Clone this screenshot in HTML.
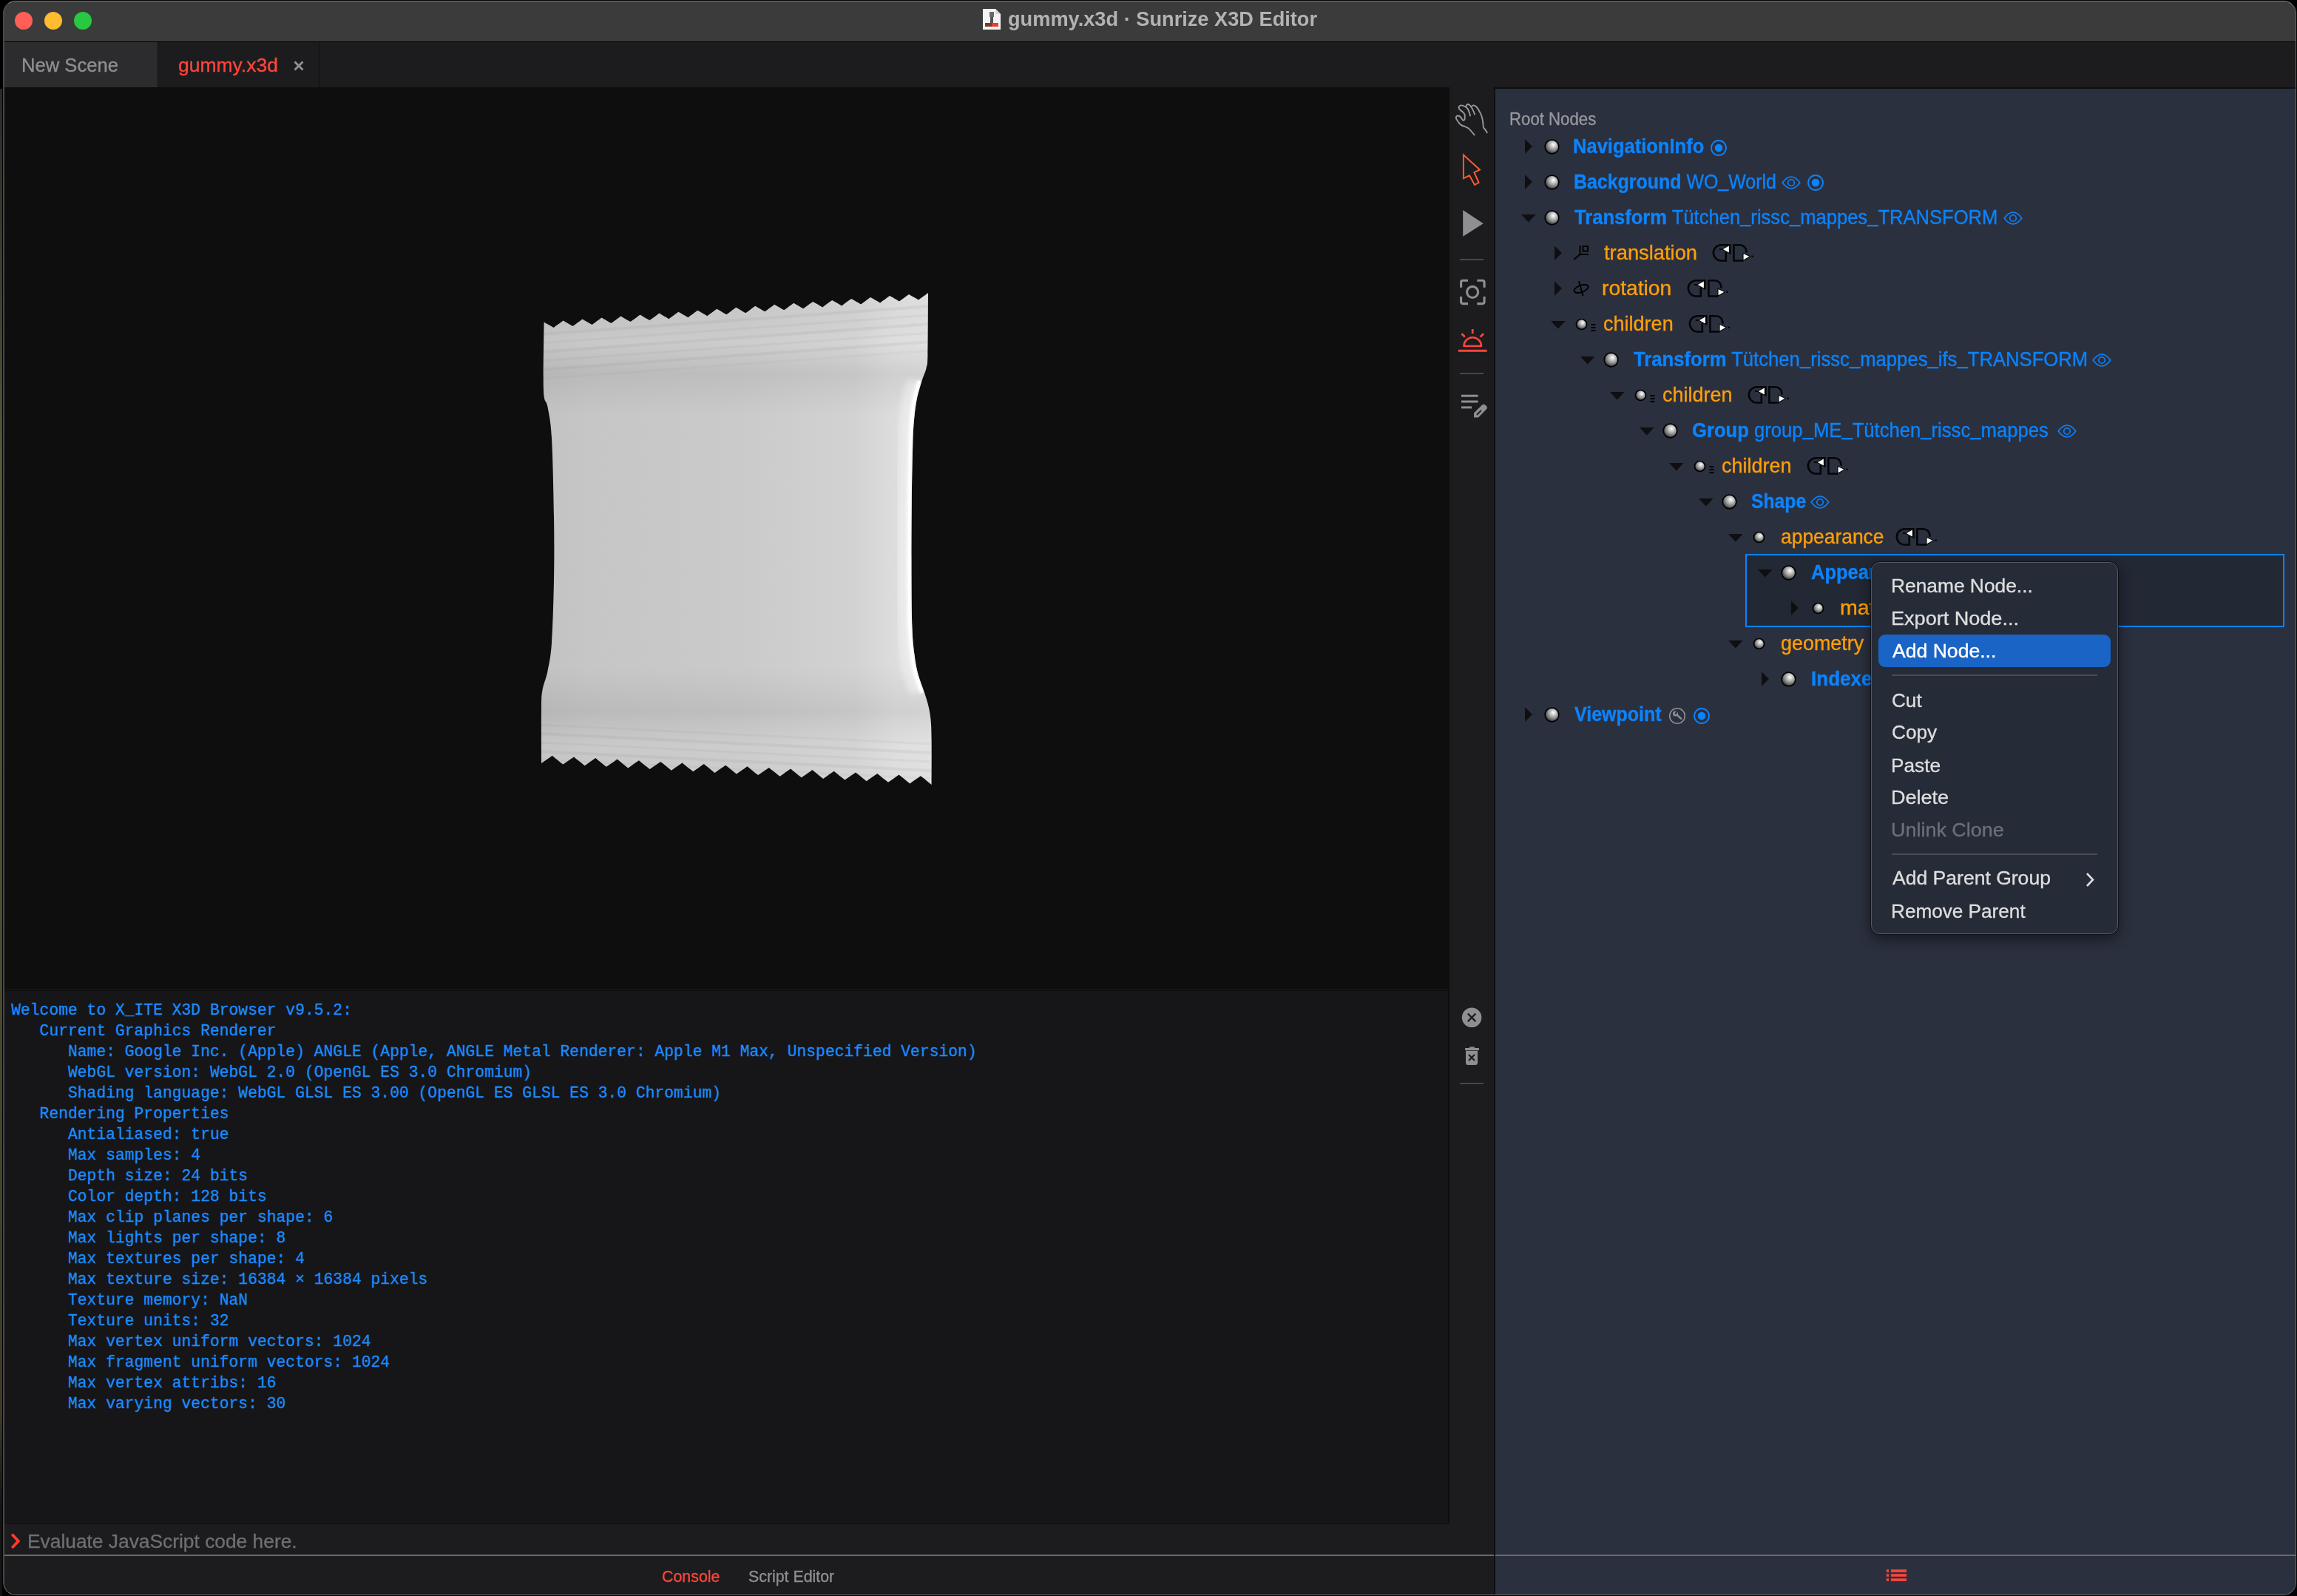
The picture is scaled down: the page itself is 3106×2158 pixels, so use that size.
<!DOCTYPE html>
<html><head><meta charset="utf-8"><title>gummy.x3d · Sunrize X3D Editor</title>
<style>
html,body{margin:0;padding:0;background:#000;width:3106px;height:2158px;overflow:hidden}
#win{position:absolute;left:0;top:0;width:3106px;height:2158px;overflow:hidden}
</style></head><body>
<div style="position:absolute;left:0;top:120px;width:3px;height:2038px;background:linear-gradient(#2a2a2a,#3d4430 15%,#525a38 25%,#4a4a30 60%,#3e3a26 88%,#131313 94%,#131313 100%)"></div>
<div id="clip" style="position:absolute;left:4px;top:1px;width:3101px;height:2156px;border-radius:17px 17px 17px 17px;overflow:hidden">
<div style="position:absolute;left:-4px;top:-1px;width:3106px;height:2158px">
<div style="position:absolute;left:4px;top:1px;width:3101px;height:56px;background:#3b3b3b;"></div>
<div style="position:absolute;left:19.7px;top:15.7px;width:24.6px;height:24.6px;border-radius:50%;background:#ff5f57"></div>
<div style="position:absolute;left:59.7px;top:15.7px;width:24.6px;height:24.6px;border-radius:50%;background:#febc2e"></div>
<div style="position:absolute;left:99.7px;top:15.7px;width:24.6px;height:24.6px;border-radius:50%;background:#28c840"></div>
<svg style="position:absolute;left:1326px;top:10px;" width="30" height="32" viewBox="0 0 30 32">
<path d="M3 2 H20 L27 9 V30 H3 Z" fill="#f4f4f4"/>
<path d="M20 2 V9 H27" fill="#d8d8d8"/>
<rect x="12" y="6" width="6" height="7" fill="#6a6a6a"/>
<rect x="13" y="13" width="4" height="8" fill="#555"/>
<rect x="6" y="21" width="18" height="5" fill="#7a3a2a"/>
<rect x="15" y="21" width="9" height="5" fill="#e8402a"/>
</svg>
<div style="position:absolute;left:1362.99px;top:13.14px;font-family:'Liberation Sans', sans-serif;font-size:27px;line-height:27px;color:#b3b3b3;font-weight:bold;white-space:pre;transform:scale(1.0072,1.0);transform-origin:0 22.86px;">gummy.x3d · Sunrize X3D Editor</div>
<div style="position:absolute;left:4px;top:56px;width:3101px;height:1px;background:#000;"></div>
<div style="position:absolute;left:4px;top:57px;width:3101px;height:61px;background:#1c1c1e;"></div>
<div style="position:absolute;left:5px;top:57px;width:208px;height:61px;background:#2c2c2e;"></div>
<div style="position:absolute;left:213px;top:57px;width:1px;height:61px;background:#111113;"></div>
<div style="position:absolute;left:431px;top:57px;width:1px;height:61px;background:#111113;"></div>
<div style="position:absolute;left:29.03px;top:74.79px;font-family:'Liberation Sans', sans-serif;font-size:26px;line-height:26px;color:#8e8e93;font-weight:normal;white-space:pre;-webkit-text-stroke:0.35px currentColor;transform:scale(0.9846,1.0);transform-origin:0 22.01px;">New Scene</div>
<div style="position:absolute;left:240.58px;top:74.79px;font-family:'Liberation Sans', sans-serif;font-size:26px;line-height:26px;color:#ff453a;font-weight:normal;white-space:pre;-webkit-text-stroke:0.35px currentColor;transform:scale(1.0185,1.0);transform-origin:0 22.01px;">gummy.x3d</div>
<svg style="position:absolute;left:396px;top:81px;" width="16" height="16" viewBox="0 0 16 16"><path d="M2.5 2.5 L13.5 13.5 M13.5 2.5 L2.5 13.5" stroke="#8e8e93" stroke-width="3"/></svg>
<div style="position:absolute;left:5px;top:118px;width:1955px;height:1219px;background:#0e0e0e;"></div>
<svg style="position:absolute;left:0px;top:0px;pointer-events:none" width="1400" height="1200" viewBox="0 0 1400 1200">
<defs>
<linearGradient id="bg1" gradientUnits="userSpaceOnUse" x1="732" y1="0" x2="1260" y2="0">
<stop offset="0" stop-color="#c2c2c2"/><stop offset=".12" stop-color="#c6c6c6"/>
<stop offset=".5" stop-color="#cacaca"/><stop offset=".8" stop-color="#d2d2d2"/>
<stop offset=".9" stop-color="#dcdcdc"/><stop offset="1" stop-color="#e0e0e0"/>
</linearGradient>
<linearGradient id="bg2" gradientUnits="userSpaceOnUse" x1="0" y1="395" x2="0" y2="1062">
<stop offset="0" stop-color="#000" stop-opacity="0"/>
<stop offset=".10" stop-color="#fff" stop-opacity=".05"/>
<stop offset=".165" stop-color="#000" stop-opacity=".06"/>
<stop offset=".25" stop-color="#000" stop-opacity="0"/>
<stop offset=".76" stop-color="#000" stop-opacity="0"/>
<stop offset=".85" stop-color="#000" stop-opacity=".06"/>
<stop offset=".92" stop-color="#fff" stop-opacity=".05"/>
<stop offset="1" stop-color="#fff" stop-opacity=".03"/>
</linearGradient>
<linearGradient id="hl" gradientUnits="userSpaceOnUse" x1="1200" y1="0" x2="1250" y2="0">
<stop offset="0" stop-color="#fff" stop-opacity="0"/>
<stop offset=".6" stop-color="#fff" stop-opacity=".35"/>
<stop offset=".85" stop-color="#fff" stop-opacity=".9"/>
<stop offset="1" stop-color="#fff" stop-opacity="0"/>
</linearGradient>
<filter id="blur1" x="-50%" y="-20%" width="200%" height="140%"><feGaussianBlur stdDeviation="4"/></filter><filter id="blur2" x="-50%" y="-20%" width="200%" height="140%"><feGaussianBlur stdDeviation="2"/></filter>
<clipPath id="bagclip"><path d="M735.6,435.5 L738.8,437.4 L742.1,439.3 L745.3,441.1 L748.6,443.0 L751.8,440.6 L755.1,438.3 L758.3,435.9 L761.6,433.5 L764.8,435.4 L768.1,437.3 L771.3,439.2 L774.6,441.0 L777.8,438.7 L781.0,436.3 L784.3,433.9 L787.5,431.6 L790.8,433.4 L794.0,435.3 L797.3,437.2 L800.5,439.1 L803.8,436.7 L807.0,434.3 L810.3,431.9 L813.5,429.6 L816.8,431.5 L820.0,433.3 L823.2,435.2 L826.5,437.1 L829.7,434.7 L833.0,432.3 L836.2,430.0 L839.5,427.6 L842.7,429.5 L846.0,431.4 L849.2,433.2 L852.5,435.1 L855.7,432.7 L859.0,430.4 L862.2,428.0 L865.5,425.6 L868.7,427.5 L871.9,429.4 L875.2,431.3 L878.4,433.1 L881.7,430.8 L884.9,428.4 L888.2,426.0 L891.4,423.6 L894.7,425.5 L897.9,427.4 L901.2,429.3 L904.4,431.2 L907.7,428.8 L910.9,426.4 L914.1,424.0 L917.4,421.7 L920.6,423.6 L923.9,425.4 L927.1,427.3 L930.4,429.2 L933.6,426.8 L936.9,424.4 L940.1,422.1 L943.4,419.7 L946.6,421.6 L949.9,423.5 L953.1,425.3 L956.3,427.2 L959.6,424.8 L962.8,422.5 L966.1,420.1 L969.3,417.7 L972.6,419.6 L975.8,421.5 L979.1,423.4 L982.3,425.2 L985.6,422.9 L988.8,420.5 L992.1,418.1 L995.3,415.8 L998.5,417.6 L1001.8,419.5 L1005.0,421.4 L1008.3,423.3 L1011.5,420.9 L1014.8,418.5 L1018.0,416.1 L1021.3,413.8 L1024.5,415.7 L1027.8,417.5 L1031.0,419.4 L1034.3,421.3 L1037.5,418.9 L1040.7,416.5 L1044.0,414.2 L1047.2,411.8 L1050.5,413.7 L1053.7,415.6 L1057.0,417.4 L1060.2,419.3 L1063.5,416.9 L1066.7,414.6 L1070.0,412.2 L1073.2,409.8 L1076.5,411.7 L1079.7,413.6 L1082.9,415.5 L1086.2,417.3 L1089.4,415.0 L1092.7,412.6 L1095.9,410.2 L1099.2,407.9 L1102.4,409.7 L1105.7,411.6 L1108.9,413.5 L1112.2,415.4 L1115.4,413.0 L1118.7,410.6 L1121.9,408.2 L1125.2,405.9 L1128.4,407.8 L1131.6,409.6 L1134.9,411.5 L1138.1,413.4 L1141.4,411.0 L1144.6,408.6 L1147.9,406.3 L1151.1,403.9 L1154.4,405.8 L1157.6,407.7 L1160.9,409.5 L1164.1,411.4 L1167.4,409.0 L1170.6,406.7 L1173.8,404.3 L1177.1,401.9 L1180.3,403.8 L1183.6,405.7 L1186.8,407.6 L1190.1,409.4 L1193.3,407.1 L1196.6,404.7 L1199.8,402.3 L1203.1,399.9 L1206.3,401.8 L1209.6,403.7 L1212.8,405.6 L1216.0,407.5 L1219.3,405.1 L1222.5,402.7 L1225.8,400.3 L1229.0,398.0 L1232.3,399.9 L1235.5,401.7 L1238.8,403.6 L1242.0,405.5 L1245.3,403.1 L1248.5,400.7 L1251.8,398.4 L1255.0,396.0 C1254.9,410.0 1254.8,463.1 1254.4,480.0 C1254.0,496.9 1253.9,491.7 1252.6,497.5 C1251.3,503.3 1248.7,507.8 1246.5,515.0 C1244.3,522.2 1241.2,532.2 1239.5,541.0 C1237.8,549.8 1236.9,557.7 1236.0,568.0 C1235.1,578.3 1234.7,584.3 1234.2,603.0 C1233.7,621.7 1233.1,650.5 1232.8,680.0 C1232.5,709.5 1232.4,751.7 1232.5,780.0 C1232.6,808.3 1232.8,832.5 1233.5,850.0 C1234.2,867.5 1235.2,875.0 1236.5,885.0 C1237.8,895.0 1238.8,901.4 1241.0,910.0 C1243.2,918.6 1247.6,929.1 1250.0,936.6 C1252.4,944.1 1254.1,948.9 1255.5,955.0 C1256.9,961.1 1257.8,965.5 1258.5,973.0 C1259.2,980.5 1259.4,985.3 1259.6,1000.0 C1259.8,1014.7 1259.6,1050.8 1259.6,1061.0 L1259.6,1061.0 L1255.9,1058.0 L1252.3,1055.1 L1248.6,1052.1 L1244.9,1049.2 L1241.3,1051.7 L1237.6,1054.3 L1234.0,1056.8 L1230.3,1059.4 L1226.6,1056.4 L1223.0,1053.5 L1219.3,1050.5 L1215.6,1047.6 L1212.0,1050.1 L1208.3,1052.7 L1204.6,1055.2 L1201.0,1057.8 L1197.3,1054.8 L1193.6,1051.9 L1190.0,1048.9 L1186.3,1046.0 L1182.7,1048.5 L1179.0,1051.1 L1175.3,1053.6 L1171.7,1056.2 L1168.0,1053.2 L1164.3,1050.3 L1160.7,1047.3 L1157.0,1044.4 L1153.3,1046.9 L1149.7,1049.5 L1146.0,1052.0 L1142.4,1054.6 L1138.7,1051.6 L1135.0,1048.7 L1131.4,1045.7 L1127.7,1042.8 L1124.0,1045.3 L1120.4,1047.8 L1116.7,1050.4 L1113.0,1052.9 L1109.4,1050.0 L1105.7,1047.0 L1102.1,1044.1 L1098.4,1041.1 L1094.7,1043.7 L1091.1,1046.2 L1087.4,1048.8 L1083.7,1051.3 L1080.1,1048.4 L1076.4,1045.4 L1072.7,1042.5 L1069.1,1039.5 L1065.4,1042.1 L1061.8,1044.6 L1058.1,1047.2 L1054.4,1049.7 L1050.8,1046.8 L1047.1,1043.8 L1043.4,1040.9 L1039.8,1037.9 L1036.1,1040.5 L1032.4,1043.0 L1028.8,1045.6 L1025.1,1048.1 L1021.4,1045.2 L1017.8,1042.2 L1014.1,1039.3 L1010.5,1036.3 L1006.8,1038.9 L1003.1,1041.4 L999.5,1044.0 L995.8,1046.5 L992.1,1043.5 L988.5,1040.6 L984.8,1037.6 L981.1,1034.7 L977.5,1037.2 L973.8,1039.8 L970.2,1042.3 L966.5,1044.9 L962.8,1041.9 L959.2,1039.0 L955.5,1036.0 L951.8,1033.1 L948.2,1035.6 L944.5,1038.2 L940.8,1040.7 L937.2,1043.3 L933.5,1040.3 L929.8,1037.4 L926.2,1034.4 L922.5,1031.5 L918.9,1034.0 L915.2,1036.6 L911.5,1039.1 L907.9,1041.7 L904.2,1038.7 L900.5,1035.8 L896.9,1032.8 L893.2,1029.9 L889.5,1032.4 L885.9,1035.0 L882.2,1037.5 L878.6,1040.1 L874.9,1037.1 L871.2,1034.2 L867.6,1031.2 L863.9,1028.2 L860.2,1030.8 L856.6,1033.3 L852.9,1035.9 L849.2,1038.4 L845.6,1035.5 L841.9,1032.5 L838.3,1029.6 L834.6,1026.6 L830.9,1029.2 L827.3,1031.7 L823.6,1034.3 L819.9,1036.8 L816.3,1033.9 L812.6,1030.9 L808.9,1028.0 L805.3,1025.0 L801.6,1027.6 L798.0,1030.1 L794.3,1032.7 L790.6,1035.2 L787.0,1032.3 L783.3,1029.3 L779.6,1026.4 L776.0,1023.4 L772.3,1026.0 L768.6,1028.5 L765.0,1031.1 L761.3,1033.6 L757.6,1030.7 L754.0,1027.7 L750.3,1024.8 L746.7,1021.8 L743.0,1024.4 L739.3,1026.9 L735.7,1029.5 L732.0,1032.0 C732.0,1019.7 731.8,974.5 732.0,958.0 C732.2,941.5 732.1,941.4 733.5,933.0 C734.9,924.6 738.4,918.2 740.5,907.5 C742.6,896.8 744.6,889.6 746.0,869.0 C747.4,848.4 748.5,812.4 749.0,784.0 C749.5,755.6 749.5,730.5 749.0,698.5 C748.5,666.5 747.4,616.8 746.0,592.0 C744.6,567.2 742.3,560.7 740.5,550.0 C738.7,539.3 735.8,547.1 735.0,528.0 C734.2,508.9 735.5,450.9 735.6,435.5 Z"/></clipPath>
</defs>
<path d="M735.6,435.5 L738.8,437.4 L742.1,439.3 L745.3,441.1 L748.6,443.0 L751.8,440.6 L755.1,438.3 L758.3,435.9 L761.6,433.5 L764.8,435.4 L768.1,437.3 L771.3,439.2 L774.6,441.0 L777.8,438.7 L781.0,436.3 L784.3,433.9 L787.5,431.6 L790.8,433.4 L794.0,435.3 L797.3,437.2 L800.5,439.1 L803.8,436.7 L807.0,434.3 L810.3,431.9 L813.5,429.6 L816.8,431.5 L820.0,433.3 L823.2,435.2 L826.5,437.1 L829.7,434.7 L833.0,432.3 L836.2,430.0 L839.5,427.6 L842.7,429.5 L846.0,431.4 L849.2,433.2 L852.5,435.1 L855.7,432.7 L859.0,430.4 L862.2,428.0 L865.5,425.6 L868.7,427.5 L871.9,429.4 L875.2,431.3 L878.4,433.1 L881.7,430.8 L884.9,428.4 L888.2,426.0 L891.4,423.6 L894.7,425.5 L897.9,427.4 L901.2,429.3 L904.4,431.2 L907.7,428.8 L910.9,426.4 L914.1,424.0 L917.4,421.7 L920.6,423.6 L923.9,425.4 L927.1,427.3 L930.4,429.2 L933.6,426.8 L936.9,424.4 L940.1,422.1 L943.4,419.7 L946.6,421.6 L949.9,423.5 L953.1,425.3 L956.3,427.2 L959.6,424.8 L962.8,422.5 L966.1,420.1 L969.3,417.7 L972.6,419.6 L975.8,421.5 L979.1,423.4 L982.3,425.2 L985.6,422.9 L988.8,420.5 L992.1,418.1 L995.3,415.8 L998.5,417.6 L1001.8,419.5 L1005.0,421.4 L1008.3,423.3 L1011.5,420.9 L1014.8,418.5 L1018.0,416.1 L1021.3,413.8 L1024.5,415.7 L1027.8,417.5 L1031.0,419.4 L1034.3,421.3 L1037.5,418.9 L1040.7,416.5 L1044.0,414.2 L1047.2,411.8 L1050.5,413.7 L1053.7,415.6 L1057.0,417.4 L1060.2,419.3 L1063.5,416.9 L1066.7,414.6 L1070.0,412.2 L1073.2,409.8 L1076.5,411.7 L1079.7,413.6 L1082.9,415.5 L1086.2,417.3 L1089.4,415.0 L1092.7,412.6 L1095.9,410.2 L1099.2,407.9 L1102.4,409.7 L1105.7,411.6 L1108.9,413.5 L1112.2,415.4 L1115.4,413.0 L1118.7,410.6 L1121.9,408.2 L1125.2,405.9 L1128.4,407.8 L1131.6,409.6 L1134.9,411.5 L1138.1,413.4 L1141.4,411.0 L1144.6,408.6 L1147.9,406.3 L1151.1,403.9 L1154.4,405.8 L1157.6,407.7 L1160.9,409.5 L1164.1,411.4 L1167.4,409.0 L1170.6,406.7 L1173.8,404.3 L1177.1,401.9 L1180.3,403.8 L1183.6,405.7 L1186.8,407.6 L1190.1,409.4 L1193.3,407.1 L1196.6,404.7 L1199.8,402.3 L1203.1,399.9 L1206.3,401.8 L1209.6,403.7 L1212.8,405.6 L1216.0,407.5 L1219.3,405.1 L1222.5,402.7 L1225.8,400.3 L1229.0,398.0 L1232.3,399.9 L1235.5,401.7 L1238.8,403.6 L1242.0,405.5 L1245.3,403.1 L1248.5,400.7 L1251.8,398.4 L1255.0,396.0 C1254.9,410.0 1254.8,463.1 1254.4,480.0 C1254.0,496.9 1253.9,491.7 1252.6,497.5 C1251.3,503.3 1248.7,507.8 1246.5,515.0 C1244.3,522.2 1241.2,532.2 1239.5,541.0 C1237.8,549.8 1236.9,557.7 1236.0,568.0 C1235.1,578.3 1234.7,584.3 1234.2,603.0 C1233.7,621.7 1233.1,650.5 1232.8,680.0 C1232.5,709.5 1232.4,751.7 1232.5,780.0 C1232.6,808.3 1232.8,832.5 1233.5,850.0 C1234.2,867.5 1235.2,875.0 1236.5,885.0 C1237.8,895.0 1238.8,901.4 1241.0,910.0 C1243.2,918.6 1247.6,929.1 1250.0,936.6 C1252.4,944.1 1254.1,948.9 1255.5,955.0 C1256.9,961.1 1257.8,965.5 1258.5,973.0 C1259.2,980.5 1259.4,985.3 1259.6,1000.0 C1259.8,1014.7 1259.6,1050.8 1259.6,1061.0 L1259.6,1061.0 L1255.9,1058.0 L1252.3,1055.1 L1248.6,1052.1 L1244.9,1049.2 L1241.3,1051.7 L1237.6,1054.3 L1234.0,1056.8 L1230.3,1059.4 L1226.6,1056.4 L1223.0,1053.5 L1219.3,1050.5 L1215.6,1047.6 L1212.0,1050.1 L1208.3,1052.7 L1204.6,1055.2 L1201.0,1057.8 L1197.3,1054.8 L1193.6,1051.9 L1190.0,1048.9 L1186.3,1046.0 L1182.7,1048.5 L1179.0,1051.1 L1175.3,1053.6 L1171.7,1056.2 L1168.0,1053.2 L1164.3,1050.3 L1160.7,1047.3 L1157.0,1044.4 L1153.3,1046.9 L1149.7,1049.5 L1146.0,1052.0 L1142.4,1054.6 L1138.7,1051.6 L1135.0,1048.7 L1131.4,1045.7 L1127.7,1042.8 L1124.0,1045.3 L1120.4,1047.8 L1116.7,1050.4 L1113.0,1052.9 L1109.4,1050.0 L1105.7,1047.0 L1102.1,1044.1 L1098.4,1041.1 L1094.7,1043.7 L1091.1,1046.2 L1087.4,1048.8 L1083.7,1051.3 L1080.1,1048.4 L1076.4,1045.4 L1072.7,1042.5 L1069.1,1039.5 L1065.4,1042.1 L1061.8,1044.6 L1058.1,1047.2 L1054.4,1049.7 L1050.8,1046.8 L1047.1,1043.8 L1043.4,1040.9 L1039.8,1037.9 L1036.1,1040.5 L1032.4,1043.0 L1028.8,1045.6 L1025.1,1048.1 L1021.4,1045.2 L1017.8,1042.2 L1014.1,1039.3 L1010.5,1036.3 L1006.8,1038.9 L1003.1,1041.4 L999.5,1044.0 L995.8,1046.5 L992.1,1043.5 L988.5,1040.6 L984.8,1037.6 L981.1,1034.7 L977.5,1037.2 L973.8,1039.8 L970.2,1042.3 L966.5,1044.9 L962.8,1041.9 L959.2,1039.0 L955.5,1036.0 L951.8,1033.1 L948.2,1035.6 L944.5,1038.2 L940.8,1040.7 L937.2,1043.3 L933.5,1040.3 L929.8,1037.4 L926.2,1034.4 L922.5,1031.5 L918.9,1034.0 L915.2,1036.6 L911.5,1039.1 L907.9,1041.7 L904.2,1038.7 L900.5,1035.8 L896.9,1032.8 L893.2,1029.9 L889.5,1032.4 L885.9,1035.0 L882.2,1037.5 L878.6,1040.1 L874.9,1037.1 L871.2,1034.2 L867.6,1031.2 L863.9,1028.2 L860.2,1030.8 L856.6,1033.3 L852.9,1035.9 L849.2,1038.4 L845.6,1035.5 L841.9,1032.5 L838.3,1029.6 L834.6,1026.6 L830.9,1029.2 L827.3,1031.7 L823.6,1034.3 L819.9,1036.8 L816.3,1033.9 L812.6,1030.9 L808.9,1028.0 L805.3,1025.0 L801.6,1027.6 L798.0,1030.1 L794.3,1032.7 L790.6,1035.2 L787.0,1032.3 L783.3,1029.3 L779.6,1026.4 L776.0,1023.4 L772.3,1026.0 L768.6,1028.5 L765.0,1031.1 L761.3,1033.6 L757.6,1030.7 L754.0,1027.7 L750.3,1024.8 L746.7,1021.8 L743.0,1024.4 L739.3,1026.9 L735.7,1029.5 L732.0,1032.0 C732.0,1019.7 731.8,974.5 732.0,958.0 C732.2,941.5 732.1,941.4 733.5,933.0 C734.9,924.6 738.4,918.2 740.5,907.5 C742.6,896.8 744.6,889.6 746.0,869.0 C747.4,848.4 748.5,812.4 749.0,784.0 C749.5,755.6 749.5,730.5 749.0,698.5 C748.5,666.5 747.4,616.8 746.0,592.0 C744.6,567.2 742.3,560.7 740.5,550.0 C738.7,539.3 735.8,547.1 735.0,528.0 C734.2,508.9 735.5,450.9 735.6,435.5 Z" fill="url(#bg1)"/>
<path d="M735.6,435.5 L738.8,437.4 L742.1,439.3 L745.3,441.1 L748.6,443.0 L751.8,440.6 L755.1,438.3 L758.3,435.9 L761.6,433.5 L764.8,435.4 L768.1,437.3 L771.3,439.2 L774.6,441.0 L777.8,438.7 L781.0,436.3 L784.3,433.9 L787.5,431.6 L790.8,433.4 L794.0,435.3 L797.3,437.2 L800.5,439.1 L803.8,436.7 L807.0,434.3 L810.3,431.9 L813.5,429.6 L816.8,431.5 L820.0,433.3 L823.2,435.2 L826.5,437.1 L829.7,434.7 L833.0,432.3 L836.2,430.0 L839.5,427.6 L842.7,429.5 L846.0,431.4 L849.2,433.2 L852.5,435.1 L855.7,432.7 L859.0,430.4 L862.2,428.0 L865.5,425.6 L868.7,427.5 L871.9,429.4 L875.2,431.3 L878.4,433.1 L881.7,430.8 L884.9,428.4 L888.2,426.0 L891.4,423.6 L894.7,425.5 L897.9,427.4 L901.2,429.3 L904.4,431.2 L907.7,428.8 L910.9,426.4 L914.1,424.0 L917.4,421.7 L920.6,423.6 L923.9,425.4 L927.1,427.3 L930.4,429.2 L933.6,426.8 L936.9,424.4 L940.1,422.1 L943.4,419.7 L946.6,421.6 L949.9,423.5 L953.1,425.3 L956.3,427.2 L959.6,424.8 L962.8,422.5 L966.1,420.1 L969.3,417.7 L972.6,419.6 L975.8,421.5 L979.1,423.4 L982.3,425.2 L985.6,422.9 L988.8,420.5 L992.1,418.1 L995.3,415.8 L998.5,417.6 L1001.8,419.5 L1005.0,421.4 L1008.3,423.3 L1011.5,420.9 L1014.8,418.5 L1018.0,416.1 L1021.3,413.8 L1024.5,415.7 L1027.8,417.5 L1031.0,419.4 L1034.3,421.3 L1037.5,418.9 L1040.7,416.5 L1044.0,414.2 L1047.2,411.8 L1050.5,413.7 L1053.7,415.6 L1057.0,417.4 L1060.2,419.3 L1063.5,416.9 L1066.7,414.6 L1070.0,412.2 L1073.2,409.8 L1076.5,411.7 L1079.7,413.6 L1082.9,415.5 L1086.2,417.3 L1089.4,415.0 L1092.7,412.6 L1095.9,410.2 L1099.2,407.9 L1102.4,409.7 L1105.7,411.6 L1108.9,413.5 L1112.2,415.4 L1115.4,413.0 L1118.7,410.6 L1121.9,408.2 L1125.2,405.9 L1128.4,407.8 L1131.6,409.6 L1134.9,411.5 L1138.1,413.4 L1141.4,411.0 L1144.6,408.6 L1147.9,406.3 L1151.1,403.9 L1154.4,405.8 L1157.6,407.7 L1160.9,409.5 L1164.1,411.4 L1167.4,409.0 L1170.6,406.7 L1173.8,404.3 L1177.1,401.9 L1180.3,403.8 L1183.6,405.7 L1186.8,407.6 L1190.1,409.4 L1193.3,407.1 L1196.6,404.7 L1199.8,402.3 L1203.1,399.9 L1206.3,401.8 L1209.6,403.7 L1212.8,405.6 L1216.0,407.5 L1219.3,405.1 L1222.5,402.7 L1225.8,400.3 L1229.0,398.0 L1232.3,399.9 L1235.5,401.7 L1238.8,403.6 L1242.0,405.5 L1245.3,403.1 L1248.5,400.7 L1251.8,398.4 L1255.0,396.0 C1254.9,410.0 1254.8,463.1 1254.4,480.0 C1254.0,496.9 1253.9,491.7 1252.6,497.5 C1251.3,503.3 1248.7,507.8 1246.5,515.0 C1244.3,522.2 1241.2,532.2 1239.5,541.0 C1237.8,549.8 1236.9,557.7 1236.0,568.0 C1235.1,578.3 1234.7,584.3 1234.2,603.0 C1233.7,621.7 1233.1,650.5 1232.8,680.0 C1232.5,709.5 1232.4,751.7 1232.5,780.0 C1232.6,808.3 1232.8,832.5 1233.5,850.0 C1234.2,867.5 1235.2,875.0 1236.5,885.0 C1237.8,895.0 1238.8,901.4 1241.0,910.0 C1243.2,918.6 1247.6,929.1 1250.0,936.6 C1252.4,944.1 1254.1,948.9 1255.5,955.0 C1256.9,961.1 1257.8,965.5 1258.5,973.0 C1259.2,980.5 1259.4,985.3 1259.6,1000.0 C1259.8,1014.7 1259.6,1050.8 1259.6,1061.0 L1259.6,1061.0 L1255.9,1058.0 L1252.3,1055.1 L1248.6,1052.1 L1244.9,1049.2 L1241.3,1051.7 L1237.6,1054.3 L1234.0,1056.8 L1230.3,1059.4 L1226.6,1056.4 L1223.0,1053.5 L1219.3,1050.5 L1215.6,1047.6 L1212.0,1050.1 L1208.3,1052.7 L1204.6,1055.2 L1201.0,1057.8 L1197.3,1054.8 L1193.6,1051.9 L1190.0,1048.9 L1186.3,1046.0 L1182.7,1048.5 L1179.0,1051.1 L1175.3,1053.6 L1171.7,1056.2 L1168.0,1053.2 L1164.3,1050.3 L1160.7,1047.3 L1157.0,1044.4 L1153.3,1046.9 L1149.7,1049.5 L1146.0,1052.0 L1142.4,1054.6 L1138.7,1051.6 L1135.0,1048.7 L1131.4,1045.7 L1127.7,1042.8 L1124.0,1045.3 L1120.4,1047.8 L1116.7,1050.4 L1113.0,1052.9 L1109.4,1050.0 L1105.7,1047.0 L1102.1,1044.1 L1098.4,1041.1 L1094.7,1043.7 L1091.1,1046.2 L1087.4,1048.8 L1083.7,1051.3 L1080.1,1048.4 L1076.4,1045.4 L1072.7,1042.5 L1069.1,1039.5 L1065.4,1042.1 L1061.8,1044.6 L1058.1,1047.2 L1054.4,1049.7 L1050.8,1046.8 L1047.1,1043.8 L1043.4,1040.9 L1039.8,1037.9 L1036.1,1040.5 L1032.4,1043.0 L1028.8,1045.6 L1025.1,1048.1 L1021.4,1045.2 L1017.8,1042.2 L1014.1,1039.3 L1010.5,1036.3 L1006.8,1038.9 L1003.1,1041.4 L999.5,1044.0 L995.8,1046.5 L992.1,1043.5 L988.5,1040.6 L984.8,1037.6 L981.1,1034.7 L977.5,1037.2 L973.8,1039.8 L970.2,1042.3 L966.5,1044.9 L962.8,1041.9 L959.2,1039.0 L955.5,1036.0 L951.8,1033.1 L948.2,1035.6 L944.5,1038.2 L940.8,1040.7 L937.2,1043.3 L933.5,1040.3 L929.8,1037.4 L926.2,1034.4 L922.5,1031.5 L918.9,1034.0 L915.2,1036.6 L911.5,1039.1 L907.9,1041.7 L904.2,1038.7 L900.5,1035.8 L896.9,1032.8 L893.2,1029.9 L889.5,1032.4 L885.9,1035.0 L882.2,1037.5 L878.6,1040.1 L874.9,1037.1 L871.2,1034.2 L867.6,1031.2 L863.9,1028.2 L860.2,1030.8 L856.6,1033.3 L852.9,1035.9 L849.2,1038.4 L845.6,1035.5 L841.9,1032.5 L838.3,1029.6 L834.6,1026.6 L830.9,1029.2 L827.3,1031.7 L823.6,1034.3 L819.9,1036.8 L816.3,1033.9 L812.6,1030.9 L808.9,1028.0 L805.3,1025.0 L801.6,1027.6 L798.0,1030.1 L794.3,1032.7 L790.6,1035.2 L787.0,1032.3 L783.3,1029.3 L779.6,1026.4 L776.0,1023.4 L772.3,1026.0 L768.6,1028.5 L765.0,1031.1 L761.3,1033.6 L757.6,1030.7 L754.0,1027.7 L750.3,1024.8 L746.7,1021.8 L743.0,1024.4 L739.3,1026.9 L735.7,1029.5 L732.0,1032.0 C732.0,1019.7 731.8,974.5 732.0,958.0 C732.2,941.5 732.1,941.4 733.5,933.0 C734.9,924.6 738.4,918.2 740.5,907.5 C742.6,896.8 744.6,889.6 746.0,869.0 C747.4,848.4 748.5,812.4 749.0,784.0 C749.5,755.6 749.5,730.5 749.0,698.5 C748.5,666.5 747.4,616.8 746.0,592.0 C744.6,567.2 742.3,560.7 740.5,550.0 C738.7,539.3 735.8,547.1 735.0,528.0 C734.2,508.9 735.5,450.9 735.6,435.5 Z" fill="url(#bg2)"/>
<g clip-path="url(#bagclip)"><path d="M730,452 L1260,414" stroke="#808080" stroke-width="4" opacity="0.1"/><path d="M730,464 L1260,426" stroke="#808080" stroke-width="3" opacity="0.08"/><path d="M730,476 L1260,438" stroke="#808080" stroke-width="4" opacity="0.1"/><path d="M730,488 L1260,450" stroke="#808080" stroke-width="3" opacity="0.08"/><path d="M730,500 L1260,462" stroke="#808080" stroke-width="4" opacity="0.1"/><path d="M730,512 L1260,474" stroke="#808080" stroke-width="3" opacity="0.06"/><path d="M730,980 L1260,1006" stroke="#808080" stroke-width="3" opacity="0.07"/><path d="M730,992 L1260,1018" stroke="#808080" stroke-width="4" opacity="0.1"/><path d="M730,1004 L1260,1030" stroke="#808080" stroke-width="3" opacity="0.08"/><path d="M730,1016 L1260,1042" stroke="#808080" stroke-width="4" opacity="0.1"/><path d="M730,1027 L1260,1053" stroke="#808080" stroke-width="3" opacity="0.07"/>
<path d="M1236.5,515.0 C1235.3,519.3 1231.2,532.2 1229.5,541.0 C1227.8,549.8 1226.9,557.7 1226.0,568.0 C1225.1,578.3 1224.7,584.3 1224.2,603.0 C1223.7,621.7 1223.1,650.5 1222.8,680.0 C1222.5,709.5 1222.4,751.7 1222.5,780.0 C1222.6,808.3 1222.8,832.5 1223.5,850.0 C1224.2,867.5 1225.2,875.0 1226.5,885.0 C1227.8,895.0 1228.8,901.4 1231.0,910.0 C1233.2,918.6 1238.5,932.2 1240.0,936.6" stroke="#ffffff" stroke-width="20" fill="none" opacity=".4" filter="url(#blur1)"/>
<path d="M1243.3,515.0 C1242.1,519.3 1238.0,532.2 1236.3,541.0 C1234.5,549.8 1233.7,557.7 1232.8,568.0 C1231.9,578.3 1231.5,584.3 1231.0,603.0 C1230.5,621.7 1229.9,650.5 1229.6,680.0 C1229.3,709.5 1229.2,751.7 1229.3,780.0 C1229.4,808.3 1229.6,832.5 1230.3,850.0 C1231.0,867.5 1232.0,875.0 1233.3,885.0 C1234.5,895.0 1235.5,901.4 1237.8,910.0 C1240.0,918.6 1245.3,932.2 1246.8,936.6" stroke="#ffffff" stroke-width="7" fill="none" opacity=".85" filter="url(#blur2)"/>
<path d="M1243.3,515.0 C1242.1,519.3 1238.0,532.2 1236.3,541.0 C1234.5,549.8 1233.7,557.7 1232.8,568.0 C1231.9,578.3 1231.5,584.3 1231.0,603.0 C1230.5,621.7 1229.9,650.5 1229.6,680.0 C1229.3,709.5 1229.2,751.7 1229.3,780.0 C1229.4,808.3 1229.6,832.5 1230.3,850.0 C1231.0,867.5 1232.0,875.0 1233.3,885.0 C1234.5,895.0 1235.5,901.4 1237.8,910.0 C1240.0,918.6 1245.3,932.2 1246.8,936.6" stroke="#ffffff" stroke-width="3" fill="none" opacity="1"/>
</g>
</svg>
<div style="position:absolute;left:5px;top:1337px;width:1953px;height:724px;background:#161618;"></div>
<div style="position:absolute;left:5px;top:1337px;width:1953px;height:1px;background:#1a1a1a;"></div>
<div style="position:absolute;left:5px;top:1338px;width:1953px;height:2px;background:#0f0f10;"></div>
<div style="position:absolute;left:1958px;top:1337px;width:2px;height:724px;background:#0e0e10;"></div>
<div style="position:absolute;left:15.2px;top:1352.32px;font-family:'Liberation Mono', monospace;font-size:21.33px;line-height:28px;color:#1a8cff;white-space:pre;-webkit-text-stroke:0.3px #1a8cff">Welcome to X_ITE X3D Browser v9.5.2:
   Current Graphics Renderer
      Name: Google Inc. (Apple) ANGLE (Apple, ANGLE Metal Renderer: Apple M1 Max, Unspecified Version)
      WebGL version: WebGL 2.0 (OpenGL ES 3.0 Chromium)
      Shading language: WebGL GLSL ES 3.00 (OpenGL ES GLSL ES 3.0 Chromium)
   Rendering Properties
      Antialiased: true
      Max samples: 4
      Depth size: 24 bits
      Color depth: 128 bits
      Max clip planes per shape: 6
      Max lights per shape: 8
      Max textures per shape: 4
      Max texture size: 16384 × 16384 pixels
      Texture memory: NaN
      Texture units: 32
      Max vertex uniform vectors: 1024
      Max fragment uniform vectors: 1024
      Max vertex attribs: 16
      Max varying vectors: 30</div>
<div style="position:absolute;left:5px;top:2061px;width:1955px;height:41px;background:#1c1c1e;"></div>
<div style="position:absolute;left:5px;top:2059.5px;width:1955px;height:1.5px;background:#0f0f11;"></div>
<svg style="position:absolute;left:12px;top:2072px;" width="18" height="24" viewBox="0 0 18 24"><path d="M4.2 2.5 L12.8 11.8 L4.2 21" stroke="#ff3b30" stroke-width="3.8" fill="none"/></svg>
<div style="position:absolute;left:36.67px;top:2070.69px;font-family:'Liberation Sans', sans-serif;font-size:26px;line-height:26px;color:#6e6e73;font-weight:normal;white-space:pre;-webkit-text-stroke:0.35px currentColor;transform:scale(1.0132,1.0);transform-origin:0 22.01px;">Evaluate JavaScript code here.</div>
<div style="position:absolute;left:5px;top:2102px;width:3099px;height:2px;background:#6a6a6a;"></div>
<div style="position:absolute;left:5px;top:2104px;width:2015px;height:52px;background:#1c1c1e;"></div>
<div style="position:absolute;left:895.03px;top:2121.37px;font-family:'Liberation Sans', sans-serif;font-size:22px;line-height:22px;color:#ff453a;font-weight:normal;white-space:pre;-webkit-text-stroke:0.35px currentColor;transform:scale(0.9722,1.0);transform-origin:0 18.63px;">Console</div>
<div style="position:absolute;left:1012.43px;top:2121.37px;font-family:'Liberation Sans', sans-serif;font-size:22px;line-height:22px;color:#8e8e93;font-weight:normal;white-space:pre;-webkit-text-stroke:0.35px currentColor;transform:scale(0.9689,1.0);transform-origin:0 18.63px;">Script Editor</div>
<div style="position:absolute;left:1960px;top:118px;width:60px;height:1984px;background:#1c1c1e;"></div>
<svg style="position:absolute;left:1960px;top:130px;" width="60" height="60" viewBox="0 0 60 60"><path d="M33.6 52.4 C30 48 27.5 45 25.9 43.6 C24 42.3 22.5 41.9 21.6 41.5 C19 40.4 17 39.8 16 39.1 C14 38 13.2 36.6 12.5 35.6 C11 33.5 9.3 31.5 9 30.3 C8.6 28 9.5 26.6 11 26.5 C13 26.4 14.5 27.6 15.3 28.6 C16.5 30 17.5 32.6 18.5 32.8 C19.8 33 20.6 31.8 20.6 30.7 C20.8 28.5 21 26.5 20.6 25.1 C20 23.3 19 22.3 18.1 21.5 C16.5 20 14 18.8 13.2 17.3 C12.4 16 12.4 14.8 12.9 14.2 C13.6 13 15 12.4 16 12.4 C18 12.4 20 13.4 21.3 14.2 C23 15.3 24.5 16.5 25.2 18 C26.6 21 27.5 24 28 26.5 M22.4 14.5 C22.8 12.5 23.6 11.2 24.5 11 C25.8 10.8 27 11.6 28 12.8 C30 15.5 31.8 18.5 32.9 21.5 C33.3 22.5 33.7 23.6 34 24.7 M30.1 13.8 C30.8 12.8 31.5 12.4 32.5 12.4 C33.8 12.4 35.2 13.3 36.4 14.5 C38 16.3 39.5 18.5 40.6 20.8 C41.7 23 42.8 25 43.4 26.8 C44.3 29.8 45 33 45.2 35.6 C45.5 38 45.6 40.5 45.9 41.9 C46.2 43 46.9 43.6 47.6 44.4 C48.8 46 50 47.8 50.8 49.3" stroke="#98989d" stroke-width="1.9" fill="none" stroke-linecap="round" stroke-linejoin="round"/></svg>
<svg style="position:absolute;left:1960px;top:200px;" width="60" height="60" viewBox="0 0 60 60"><path d="M18.9 9.6 L41 29.5 L33.4 33.2 L39.6 46.8 L34 50 L27 37.3 L18.9 41.2 Z" stroke="#ff5a36" stroke-width="2" fill="none" stroke-linejoin="miter"/></svg>
<svg style="position:absolute;left:1960px;top:270px;" width="60" height="60" viewBox="0 0 60 60"><path d="M18.2 14 L45.7 32.2 L18.2 49.8 Z" fill="#8e8e93"/></svg>
<div style="position:absolute;left:1974px;top:350px;width:32px;height:2px;background:#48484a;"></div>
<div style="position:absolute;left:1974px;top:504px;width:32px;height:2px;background:#48484a;"></div>
<svg style="position:absolute;left:1960px;top:370px;" width="60" height="50" viewBox="0 0 60 50"><g stroke="#8e8e93" stroke-width="3.1" fill="none" stroke-linecap="butt" stroke-linejoin="round">
<path d="M15.6 18.8 V11.7 Q15.6 9.2 18.1 9.2 H25"/><path d="M37.3 9.2 H44.6 Q47.1 9.2 47.1 11.7 V18.8"/><path d="M15.6 31 V38.1 Q15.6 40.6 18.1 40.6 H25"/><path d="M37.3 40.6 H44.6 Q47.1 40.6 47.1 38.1 V31"/>
<circle cx="31.1" cy="24.9" r="7.55"/></g></svg>
<svg style="position:absolute;left:1960px;top:440px;" width="60" height="40" viewBox="0 0 60 40"><g stroke="#ff453a" fill="none">
<path d="M19.5 28 A11.7 11.7 0 0 1 43 28 Z" stroke-width="2.6" stroke-linejoin="round"/>
<path d="M12 34.3 H50.7" stroke-width="3"/>
<path d="M31.2 5 V11" stroke-width="2.8"/>
<path d="M16.5 11.2 L20.8 15.6" stroke-width="2.8"/>
<path d="M46 11.2 L41.7 15.6" stroke-width="2.8"/>
</g></svg>
<svg style="position:absolute;left:1960px;top:525px;" width="60" height="45" viewBox="0 0 60 45"><g fill="#8e8e93">
<rect x="16" y="8.7" width="22.5" height="3"/><rect x="16" y="16.5" width="22.5" height="3"/><rect x="16" y="24.4" width="14" height="3"/>
<path d="M33 39.5 L33 33.6 L43.8 22.8 Q46 20.6 48.6 22.8 L49.8 24 Q52 26.2 49.8 28.6 L39 39.5 Z"/></g><path d="M37.4 35.4 L42.4 30.4" stroke="#1c1c1e" stroke-width="2" stroke-linecap="round"/><g>
</g></svg>
<svg style="position:absolute;left:1960px;top:1355px;" width="60" height="45" viewBox="0 0 60 45"><circle cx="30.1" cy="20.8" r="13.3" fill="#8e8e93"/><path d="M24.8 15.5 L35.4 26.1 M35.4 15.5 L24.8 26.1" stroke="#1c1c1e" stroke-width="2.4"/></svg>
<svg style="position:absolute;left:1960px;top:1410px;" width="60" height="40" viewBox="0 0 60 40"><g fill="#8e8e93"><rect x="21" y="7" width="19" height="3.2" rx="0.8"/><rect x="27" y="5.6" width="7" height="2" rx="0.8"/><path d="M22 11 H38 V27 Q38 30 35 30 H25 Q22 30 22 27 Z"/></g><path d="M26 16 L34 24 M34 16 L26 24" stroke="#1c1c1e" stroke-width="2.2"/></svg>
<div style="position:absolute;left:1974px;top:1464px;width:32px;height:2px;background:#48484a;"></div>
<div style="position:absolute;left:2020px;top:118px;width:1085px;height:2px;background:#0e0e10;"></div>
<div style="position:absolute;left:2020px;top:118px;width:2px;height:2038px;background:#0e0e10;"></div>
<div style="position:absolute;left:2022px;top:120px;width:1083px;height:1982px;background:#2b303f;"></div>
<div style="position:absolute;left:2022px;top:2104px;width:1083px;height:52px;background:#2b303f;"></div>
<div style="position:absolute;left:2041.15px;top:148.88px;font-family:'Liberation Sans', sans-serif;font-size:24px;line-height:24px;color:#98989d;font-weight:normal;white-space:pre;-webkit-text-stroke:0.35px currentColor;transform:scale(0.9250,1.0);transform-origin:0 20.32px;">Root Nodes</div>
<svg style="position:absolute;left:2061px;top:188px;" width="12" height="21" viewBox="0 0 12 21"><path d="M1 0.2 V20 L11 10.1 Z" fill="#0f0f12"/></svg>
<svg style="position:absolute;left:2086.5px;top:186.5px;" width="23" height="23" viewBox="0 0 23 23"><defs><radialGradient id="sg1" cx="0.6" cy="0.36" r="0.68" fx="0.6" fy="0.34">
<stop offset="0" stop-color="#ffffff"/><stop offset=".22" stop-color="#d6d6d6"/><stop offset=".6" stop-color="#8a8a8a"/><stop offset=".85" stop-color="#4c4c4c"/><stop offset="1" stop-color="#282828"/></radialGradient></defs>
<circle cx="11.5" cy="11.5" r="9.3" fill="url(#sg1)" stroke="#000" stroke-width="1.7"/></svg>
<div style="position:absolute;left:2127.48px;top:184.09px;font-family:'Liberation Sans', sans-serif;font-size:28px;line-height:28px;color:#0a84ff;font-weight:normal;white-space:pre;-webkit-text-stroke:0.35px currentColor;transform:scale(0.9115,1.0);transform-origin:0 23.71px;"><b>NavigationInfo</b></div>
<svg style="position:absolute;left:2061px;top:236px;" width="12" height="21" viewBox="0 0 12 21"><path d="M1 0.2 V20 L11 10.1 Z" fill="#0f0f12"/></svg>
<svg style="position:absolute;left:2086.5px;top:234.5px;" width="23" height="23" viewBox="0 0 23 23"><defs><radialGradient id="sg2" cx="0.6" cy="0.36" r="0.68" fx="0.6" fy="0.34">
<stop offset="0" stop-color="#ffffff"/><stop offset=".22" stop-color="#d6d6d6"/><stop offset=".6" stop-color="#8a8a8a"/><stop offset=".85" stop-color="#4c4c4c"/><stop offset="1" stop-color="#282828"/></radialGradient></defs>
<circle cx="11.5" cy="11.5" r="9.3" fill="url(#sg2)" stroke="#000" stroke-width="1.7"/></svg>
<div style="position:absolute;left:2127.52px;top:232.09px;font-family:'Liberation Sans', sans-serif;font-size:28px;line-height:28px;color:#0a84ff;font-weight:normal;white-space:pre;-webkit-text-stroke:0.35px currentColor;transform:scale(0.8905,1.0);transform-origin:0 23.71px;"><b>Background</b> WO<span style="position:relative;top:-3.5px">_</span>World</div>
<svg style="position:absolute;left:2056.5px;top:289.7px;" width="21" height="12" viewBox="0 0 21 12"><path d="M0 0 H19.6 L9.8 10.4 Z" fill="#0f0f12"/></svg>
<svg style="position:absolute;left:2086.5px;top:282.5px;" width="23" height="23" viewBox="0 0 23 23"><defs><radialGradient id="sg3" cx="0.6" cy="0.36" r="0.68" fx="0.6" fy="0.34">
<stop offset="0" stop-color="#ffffff"/><stop offset=".22" stop-color="#d6d6d6"/><stop offset=".6" stop-color="#8a8a8a"/><stop offset=".85" stop-color="#4c4c4c"/><stop offset="1" stop-color="#282828"/></radialGradient></defs>
<circle cx="11.5" cy="11.5" r="9.3" fill="url(#sg3)" stroke="#000" stroke-width="1.7"/></svg>
<div style="position:absolute;left:2129.30px;top:280.09px;font-family:'Liberation Sans', sans-serif;font-size:28px;line-height:28px;color:#0a84ff;font-weight:normal;white-space:pre;-webkit-text-stroke:0.35px currentColor;transform:scale(0.9134,1.0);transform-origin:0 23.71px;"><b>Transform</b> Tütchen<span style="position:relative;top:-3.5px">_</span>rissc<span style="position:relative;top:-3.5px">_</span>mappes<span style="position:relative;top:-3.5px">_</span>TRANSFORM</div>
<svg style="position:absolute;left:2101px;top:332px;" width="12" height="21" viewBox="0 0 12 21"><path d="M1 0.2 V20 L11 10.1 Z" fill="#0f0f12"/></svg>
<svg style="position:absolute;left:2125.5px;top:330px;" width="24" height="24" viewBox="0 0 24 24"><g stroke="#000" stroke-width="1.9" fill="none"><path d="M10.5 2 V14 H22"/><path d="M10.5 14 L2 21"/><rect x="14.5" y="3" width="6.5" height="6.5"/></g></svg>
<div style="position:absolute;left:2168.50px;top:328.09px;font-family:'Liberation Sans', sans-serif;font-size:28px;line-height:28px;color:#ff9f0a;font-weight:normal;white-space:pre;-webkit-text-stroke:0.35px currentColor;transform:scale(0.9758,1.0);transform-origin:0 23.71px;">translation</div>
<svg style="position:absolute;left:2101px;top:380px;" width="12" height="21" viewBox="0 0 12 21"><path d="M1 0.2 V20 L11 10.1 Z" fill="#0f0f12"/></svg>
<svg style="position:absolute;left:2126px;top:378px;" width="24" height="24" viewBox="0 0 24 24"><g stroke="#000" stroke-width="1.9" fill="none"><ellipse cx="12" cy="12.5" rx="10" ry="4.6" transform="rotate(-20 12 12.5)"/><path d="M9 2 L14.5 22"/></g></svg>
<div style="position:absolute;left:2166.48px;top:376.09px;font-family:'Liberation Sans', sans-serif;font-size:28px;line-height:28px;color:#ff9f0a;font-weight:normal;white-space:pre;-webkit-text-stroke:0.35px currentColor;transform:scale(1.0100,1.0);transform-origin:0 23.71px;">rotation</div>
<svg style="position:absolute;left:2096.5px;top:433.7px;" width="21" height="12" viewBox="0 0 21 12"><path d="M0 0 H19.6 L9.8 10.4 Z" fill="#0f0f12"/></svg>
<svg style="position:absolute;left:2128.5px;top:428.5px;" width="19" height="19" viewBox="0 0 19 19"><defs><radialGradient id="sg4" cx="0.6" cy="0.36" r="0.68" fx="0.6" fy="0.34">
<stop offset="0" stop-color="#ffffff"/><stop offset=".22" stop-color="#d6d6d6"/><stop offset=".6" stop-color="#8a8a8a"/><stop offset=".85" stop-color="#4c4c4c"/><stop offset="1" stop-color="#282828"/></radialGradient></defs>
<circle cx="9.5" cy="9.5" r="7.0" fill="url(#sg4)" stroke="#000" stroke-width="1.7"/></svg>
<svg style="position:absolute;left:2151px;top:437px;" width="8" height="12" viewBox="0 0 8 12"><rect x="0.5" y="1" width="6" height="2" fill="#000"/><rect x="0.5" y="5" width="6" height="2" fill="#000"/><rect x="0.5" y="9" width="6" height="2" fill="#000"/></svg>
<div style="position:absolute;left:2167.53px;top:424.09px;font-family:'Liberation Sans', sans-serif;font-size:28px;line-height:28px;color:#ff9f0a;font-weight:normal;white-space:pre;-webkit-text-stroke:0.35px currentColor;transform:scale(0.9656,1.0);transform-origin:0 23.71px;">children</div>
<svg style="position:absolute;left:2136.5px;top:481.7px;" width="21" height="12" viewBox="0 0 21 12"><path d="M0 0 H19.6 L9.8 10.4 Z" fill="#0f0f12"/></svg>
<svg style="position:absolute;left:2166.5px;top:474.5px;" width="23" height="23" viewBox="0 0 23 23"><defs><radialGradient id="sg5" cx="0.6" cy="0.36" r="0.68" fx="0.6" fy="0.34">
<stop offset="0" stop-color="#ffffff"/><stop offset=".22" stop-color="#d6d6d6"/><stop offset=".6" stop-color="#8a8a8a"/><stop offset=".85" stop-color="#4c4c4c"/><stop offset="1" stop-color="#282828"/></radialGradient></defs>
<circle cx="11.5" cy="11.5" r="9.3" fill="url(#sg5)" stroke="#000" stroke-width="1.7"/></svg>
<div style="position:absolute;left:2209.30px;top:472.09px;font-family:'Liberation Sans', sans-serif;font-size:28px;line-height:28px;color:#0a84ff;font-weight:normal;white-space:pre;-webkit-text-stroke:0.35px currentColor;transform:scale(0.9165,1.0);transform-origin:0 23.71px;"><b>Transform</b> Tütchen<span style="position:relative;top:-3.5px">_</span>rissc<span style="position:relative;top:-3.5px">_</span>mappes<span style="position:relative;top:-3.5px">_</span>ifs<span style="position:relative;top:-3.5px">_</span>TRANSFORM</div>
<svg style="position:absolute;left:2176.5px;top:529.7px;" width="21" height="12" viewBox="0 0 21 12"><path d="M0 0 H19.6 L9.8 10.4 Z" fill="#0f0f12"/></svg>
<svg style="position:absolute;left:2208.5px;top:524.5px;" width="19" height="19" viewBox="0 0 19 19"><defs><radialGradient id="sg6" cx="0.6" cy="0.36" r="0.68" fx="0.6" fy="0.34">
<stop offset="0" stop-color="#ffffff"/><stop offset=".22" stop-color="#d6d6d6"/><stop offset=".6" stop-color="#8a8a8a"/><stop offset=".85" stop-color="#4c4c4c"/><stop offset="1" stop-color="#282828"/></radialGradient></defs>
<circle cx="9.5" cy="9.5" r="7.0" fill="url(#sg6)" stroke="#000" stroke-width="1.7"/></svg>
<svg style="position:absolute;left:2231px;top:533px;" width="8" height="12" viewBox="0 0 8 12"><rect x="0.5" y="1" width="6" height="2" fill="#000"/><rect x="0.5" y="5" width="6" height="2" fill="#000"/><rect x="0.5" y="9" width="6" height="2" fill="#000"/></svg>
<div style="position:absolute;left:2247.54px;top:520.09px;font-family:'Liberation Sans', sans-serif;font-size:28px;line-height:28px;color:#ff9f0a;font-weight:normal;white-space:pre;-webkit-text-stroke:0.35px currentColor;transform:scale(0.9635,1.0);transform-origin:0 23.71px;">children</div>
<svg style="position:absolute;left:2216.5px;top:577.7px;" width="21" height="12" viewBox="0 0 21 12"><path d="M0 0 H19.6 L9.8 10.4 Z" fill="#0f0f12"/></svg>
<svg style="position:absolute;left:2246.5px;top:570.5px;" width="23" height="23" viewBox="0 0 23 23"><defs><radialGradient id="sg7" cx="0.6" cy="0.36" r="0.68" fx="0.6" fy="0.34">
<stop offset="0" stop-color="#ffffff"/><stop offset=".22" stop-color="#d6d6d6"/><stop offset=".6" stop-color="#8a8a8a"/><stop offset=".85" stop-color="#4c4c4c"/><stop offset="1" stop-color="#282828"/></radialGradient></defs>
<circle cx="11.5" cy="11.5" r="9.3" fill="url(#sg7)" stroke="#000" stroke-width="1.7"/></svg>
<div style="position:absolute;left:2288.38px;top:568.09px;font-family:'Liberation Sans', sans-serif;font-size:28px;line-height:28px;color:#0a84ff;font-weight:normal;white-space:pre;-webkit-text-stroke:0.35px currentColor;transform:scale(0.9158,1.0);transform-origin:0 23.71px;"><b>Group</b> group<span style="position:relative;top:-3.5px">_</span>ME<span style="position:relative;top:-3.5px">_</span>Tütchen<span style="position:relative;top:-3.5px">_</span>rissc<span style="position:relative;top:-3.5px">_</span>mappes</div>
<svg style="position:absolute;left:2256.5px;top:625.7px;" width="21" height="12" viewBox="0 0 21 12"><path d="M0 0 H19.6 L9.8 10.4 Z" fill="#0f0f12"/></svg>
<svg style="position:absolute;left:2288.5px;top:620.5px;" width="19" height="19" viewBox="0 0 19 19"><defs><radialGradient id="sg8" cx="0.6" cy="0.36" r="0.68" fx="0.6" fy="0.34">
<stop offset="0" stop-color="#ffffff"/><stop offset=".22" stop-color="#d6d6d6"/><stop offset=".6" stop-color="#8a8a8a"/><stop offset=".85" stop-color="#4c4c4c"/><stop offset="1" stop-color="#282828"/></radialGradient></defs>
<circle cx="9.5" cy="9.5" r="7.0" fill="url(#sg8)" stroke="#000" stroke-width="1.7"/></svg>
<svg style="position:absolute;left:2311px;top:629px;" width="8" height="12" viewBox="0 0 8 12"><rect x="0.5" y="1" width="6" height="2" fill="#000"/><rect x="0.5" y="5" width="6" height="2" fill="#000"/><rect x="0.5" y="9" width="6" height="2" fill="#000"/></svg>
<div style="position:absolute;left:2327.54px;top:616.09px;font-family:'Liberation Sans', sans-serif;font-size:28px;line-height:28px;color:#ff9f0a;font-weight:normal;white-space:pre;-webkit-text-stroke:0.35px currentColor;transform:scale(0.9635,1.0);transform-origin:0 23.71px;">children</div>
<svg style="position:absolute;left:2296.5px;top:673.7px;" width="21" height="12" viewBox="0 0 21 12"><path d="M0 0 H19.6 L9.8 10.4 Z" fill="#0f0f12"/></svg>
<svg style="position:absolute;left:2326.5px;top:666.5px;" width="23" height="23" viewBox="0 0 23 23"><defs><radialGradient id="sg9" cx="0.6" cy="0.36" r="0.68" fx="0.6" fy="0.34">
<stop offset="0" stop-color="#ffffff"/><stop offset=".22" stop-color="#d6d6d6"/><stop offset=".6" stop-color="#8a8a8a"/><stop offset=".85" stop-color="#4c4c4c"/><stop offset="1" stop-color="#282828"/></radialGradient></defs>
<circle cx="11.5" cy="11.5" r="9.3" fill="url(#sg9)" stroke="#000" stroke-width="1.7"/></svg>
<div style="position:absolute;left:2368.42px;top:664.09px;font-family:'Liberation Sans', sans-serif;font-size:28px;line-height:28px;color:#0a84ff;font-weight:normal;white-space:pre;-webkit-text-stroke:0.35px currentColor;transform:scale(0.8831,1.0);transform-origin:0 23.71px;"><b>Shape</b></div>
<svg style="position:absolute;left:2336.5px;top:721.7px;" width="21" height="12" viewBox="0 0 21 12"><path d="M0 0 H19.6 L9.8 10.4 Z" fill="#0f0f12"/></svg>
<svg style="position:absolute;left:2368.5px;top:716.5px;" width="19" height="19" viewBox="0 0 19 19"><defs><radialGradient id="sg10" cx="0.6" cy="0.36" r="0.68" fx="0.6" fy="0.34">
<stop offset="0" stop-color="#ffffff"/><stop offset=".22" stop-color="#d6d6d6"/><stop offset=".6" stop-color="#8a8a8a"/><stop offset=".85" stop-color="#4c4c4c"/><stop offset="1" stop-color="#282828"/></radialGradient></defs>
<circle cx="9.5" cy="9.5" r="7.0" fill="url(#sg10)" stroke="#000" stroke-width="1.7"/></svg>
<div style="position:absolute;left:2407.56px;top:712.09px;font-family:'Liberation Sans', sans-serif;font-size:28px;line-height:28px;color:#ff9f0a;font-weight:normal;white-space:pre;-webkit-text-stroke:0.35px currentColor;transform:scale(0.9432,1.0);transform-origin:0 23.71px;">appearance</div>
<div style="position:absolute;left:2360px;top:749px;width:729px;height:99px;background:#222834;box-sizing:border-box;border:2.5px solid #0a84ff"></div>
<svg style="position:absolute;left:2376.5px;top:769.7px;" width="21" height="12" viewBox="0 0 21 12"><path d="M0 0 H19.6 L9.8 10.4 Z" fill="#0f0f12"/></svg>
<svg style="position:absolute;left:2406.5px;top:762.5px;" width="23" height="23" viewBox="0 0 23 23"><defs><radialGradient id="sg11" cx="0.6" cy="0.36" r="0.68" fx="0.6" fy="0.34">
<stop offset="0" stop-color="#ffffff"/><stop offset=".22" stop-color="#d6d6d6"/><stop offset=".6" stop-color="#8a8a8a"/><stop offset=".85" stop-color="#4c4c4c"/><stop offset="1" stop-color="#282828"/></radialGradient></defs>
<circle cx="11.5" cy="11.5" r="9.3" fill="url(#sg11)" stroke="#000" stroke-width="1.7"/></svg>
<div style="position:absolute;left:2449.00px;top:760.09px;font-family:'Liberation Sans', sans-serif;font-size:28px;line-height:28px;color:#0a84ff;font-weight:normal;white-space:pre;-webkit-text-stroke:0.35px currentColor;transform:scale(0.9100,1.0);transform-origin:0 23.71px;"><b>Appearance</b></div>
<svg style="position:absolute;left:2421px;top:812px;" width="12" height="21" viewBox="0 0 12 21"><path d="M1 0.2 V20 L11 10.1 Z" fill="#0f0f12"/></svg>
<svg style="position:absolute;left:2448.5px;top:812.5px;" width="19" height="19" viewBox="0 0 19 19"><defs><radialGradient id="sg12" cx="0.6" cy="0.36" r="0.68" fx="0.6" fy="0.34">
<stop offset="0" stop-color="#ffffff"/><stop offset=".22" stop-color="#d6d6d6"/><stop offset=".6" stop-color="#8a8a8a"/><stop offset=".85" stop-color="#4c4c4c"/><stop offset="1" stop-color="#282828"/></radialGradient></defs>
<circle cx="9.5" cy="9.5" r="7.0" fill="url(#sg12)" stroke="#000" stroke-width="1.7"/></svg>
<div style="position:absolute;left:2488.00px;top:808.09px;font-family:'Liberation Sans', sans-serif;font-size:28px;line-height:28px;color:#ff9f0a;font-weight:normal;white-space:pre;-webkit-text-stroke:0.35px currentColor;transform:scale(1.0200,1.0);transform-origin:0 23.71px;">material</div>
<svg style="position:absolute;left:2336.5px;top:865.7px;" width="21" height="12" viewBox="0 0 21 12"><path d="M0 0 H19.6 L9.8 10.4 Z" fill="#0f0f12"/></svg>
<svg style="position:absolute;left:2368.5px;top:860.5px;" width="19" height="19" viewBox="0 0 19 19"><defs><radialGradient id="sg13" cx="0.6" cy="0.36" r="0.68" fx="0.6" fy="0.34">
<stop offset="0" stop-color="#ffffff"/><stop offset=".22" stop-color="#d6d6d6"/><stop offset=".6" stop-color="#8a8a8a"/><stop offset=".85" stop-color="#4c4c4c"/><stop offset="1" stop-color="#282828"/></radialGradient></defs>
<circle cx="9.5" cy="9.5" r="7.0" fill="url(#sg13)" stroke="#000" stroke-width="1.7"/></svg>
<div style="position:absolute;left:2407.54px;top:856.09px;font-family:'Liberation Sans', sans-serif;font-size:28px;line-height:28px;color:#ff9f0a;font-weight:normal;white-space:pre;-webkit-text-stroke:0.35px currentColor;transform:scale(0.9612,1.0);transform-origin:0 23.71px;">geometry</div>
<svg style="position:absolute;left:2381px;top:908px;" width="12" height="21" viewBox="0 0 12 21"><path d="M1 0.2 V20 L11 10.1 Z" fill="#0f0f12"/></svg>
<svg style="position:absolute;left:2406.5px;top:906.5px;" width="23" height="23" viewBox="0 0 23 23"><defs><radialGradient id="sg14" cx="0.6" cy="0.36" r="0.68" fx="0.6" fy="0.34">
<stop offset="0" stop-color="#ffffff"/><stop offset=".22" stop-color="#d6d6d6"/><stop offset=".6" stop-color="#8a8a8a"/><stop offset=".85" stop-color="#4c4c4c"/><stop offset="1" stop-color="#282828"/></radialGradient></defs>
<circle cx="11.5" cy="11.5" r="9.3" fill="url(#sg14)" stroke="#000" stroke-width="1.7"/></svg>
<div style="position:absolute;left:2449.00px;top:904.09px;font-family:'Liberation Sans', sans-serif;font-size:28px;line-height:28px;color:#0a84ff;font-weight:normal;white-space:pre;-webkit-text-stroke:0.35px currentColor;transform:scale(0.9300,1.0);transform-origin:0 23.71px;"><b>IndexedFaceSet</b></div>
<svg style="position:absolute;left:2061px;top:956px;" width="12" height="21" viewBox="0 0 12 21"><path d="M1 0.2 V20 L11 10.1 Z" fill="#0f0f12"/></svg>
<svg style="position:absolute;left:2086.5px;top:954.5px;" width="23" height="23" viewBox="0 0 23 23"><defs><radialGradient id="sg15" cx="0.6" cy="0.36" r="0.68" fx="0.6" fy="0.34">
<stop offset="0" stop-color="#ffffff"/><stop offset=".22" stop-color="#d6d6d6"/><stop offset=".6" stop-color="#8a8a8a"/><stop offset=".85" stop-color="#4c4c4c"/><stop offset="1" stop-color="#282828"/></radialGradient></defs>
<circle cx="11.5" cy="11.5" r="9.3" fill="url(#sg15)" stroke="#000" stroke-width="1.7"/></svg>
<div style="position:absolute;left:2129.30px;top:952.09px;font-family:'Liberation Sans', sans-serif;font-size:28px;line-height:28px;color:#0a84ff;font-weight:normal;white-space:pre;-webkit-text-stroke:0.35px currentColor;transform:scale(0.8932,1.0);transform-origin:0 23.71px;"><b>Viewpoint</b></div>
<svg style="position:absolute;left:2312.3px;top:187.5px;" width="24" height="24" viewBox="0 0 24 24"><circle cx="12" cy="12" r="10" stroke="#0a84ff" stroke-width="1.8" fill="none"/><circle cx="12" cy="12" r="5.3" fill="#0a84ff"/></svg>
<svg style="position:absolute;left:2409px;top:238px;" width="26" height="18" viewBox="0 0 26 18"><path d="M1.2 9 Q13 -7 24.8 9 Q13 25 1.2 9 Z" stroke="#0a84ff" stroke-width="1.6" fill="none"/><circle cx="13" cy="9" r="4.3" stroke="#0a84ff" stroke-width="1.6" fill="none"/></svg>
<svg style="position:absolute;left:2442.7px;top:235.4px;" width="24" height="24" viewBox="0 0 24 24"><circle cx="12" cy="12" r="10" stroke="#0a84ff" stroke-width="1.8" fill="none"/><circle cx="12" cy="12" r="5.3" fill="#0a84ff"/></svg>
<svg style="position:absolute;left:2709px;top:286px;" width="26" height="18" viewBox="0 0 26 18"><path d="M1.2 9 Q13 -7 24.8 9 Q13 25 1.2 9 Z" stroke="#0a84ff" stroke-width="1.6" fill="none"/><circle cx="13" cy="9" r="4.3" stroke="#0a84ff" stroke-width="1.6" fill="none"/></svg>
<svg style="position:absolute;left:2309.8px;top:319.7px;" width="64" height="44" viewBox="0 0 64 44"><g fill="none" stroke="#050507" stroke-width="2.6">
<path d="M23.8 21 V32.5 H17.5 A10.65 10.65 0 0 1 17.5 11.2 H29.3 V23.6"/>
<path d="M34.4 10.2 V32.5 H47.5 M34.4 11.2 H42.5 A9 9 0 0 1 51.5 20.2 V21.8"/>
</g>
<path d="M18.6 17 L28.4 11.6 V22.6 Z" fill="#fff" stroke="#050507" stroke-width="1.1" stroke-linejoin="bevel"/>
<rect x="14.8" y="16" width="3.8" height="2" fill="#050507"/>
<path d="M47 22.3 V32.3 L56.6 26.8 Z" fill="#fff" stroke="#050507" stroke-width="1.1" stroke-linejoin="bevel"/>
<rect x="58.4" y="25.6" width="2.4" height="2.4" fill="#050507"/>
</svg>
<svg style="position:absolute;left:2275.8px;top:368px;" width="64" height="44" viewBox="0 0 64 44"><g fill="none" stroke="#050507" stroke-width="2.6">
<path d="M23.8 21 V32.5 H17.5 A10.65 10.65 0 0 1 17.5 11.2 H29.3 V23.6"/>
<path d="M34.4 10.2 V32.5 H47.5 M34.4 11.2 H42.5 A9 9 0 0 1 51.5 20.2 V21.8"/>
</g>
<path d="M18.6 17 L28.4 11.6 V22.6 Z" fill="#fff" stroke="#050507" stroke-width="1.1" stroke-linejoin="bevel"/>
<rect x="14.8" y="16" width="3.8" height="2" fill="#050507"/>
<path d="M47 22.3 V32.3 L56.6 26.8 Z" fill="#fff" stroke="#050507" stroke-width="1.1" stroke-linejoin="bevel"/>
<rect x="58.4" y="25.6" width="2.4" height="2.4" fill="#050507"/>
</svg>
<svg style="position:absolute;left:2277.8px;top:416px;" width="64" height="44" viewBox="0 0 64 44"><g fill="none" stroke="#050507" stroke-width="2.6">
<path d="M23.8 21 V32.5 H17.5 A10.65 10.65 0 0 1 17.5 11.2 H29.3 V23.6"/>
<path d="M34.4 10.2 V32.5 H47.5 M34.4 11.2 H42.5 A9 9 0 0 1 51.5 20.2 V21.8"/>
</g>
<path d="M18.6 17 L28.4 11.6 V22.6 Z" fill="#fff" stroke="#050507" stroke-width="1.1" stroke-linejoin="bevel"/>
<rect x="14.8" y="16" width="3.8" height="2" fill="#050507"/>
<path d="M47 22.3 V32.3 L56.6 26.8 Z" fill="#fff" stroke="#050507" stroke-width="1.1" stroke-linejoin="bevel"/>
<rect x="58.4" y="25.6" width="2.4" height="2.4" fill="#050507"/>
</svg>
<svg style="position:absolute;left:2829px;top:478px;" width="26" height="18" viewBox="0 0 26 18"><path d="M1.2 9 Q13 -7 24.8 9 Q13 25 1.2 9 Z" stroke="#0a84ff" stroke-width="1.6" fill="none"/><circle cx="13" cy="9" r="4.3" stroke="#0a84ff" stroke-width="1.6" fill="none"/></svg>
<svg style="position:absolute;left:2357.8px;top:512px;" width="64" height="44" viewBox="0 0 64 44"><g fill="none" stroke="#050507" stroke-width="2.6">
<path d="M23.8 21 V32.5 H17.5 A10.65 10.65 0 0 1 17.5 11.2 H29.3 V23.6"/>
<path d="M34.4 10.2 V32.5 H47.5 M34.4 11.2 H42.5 A9 9 0 0 1 51.5 20.2 V21.8"/>
</g>
<path d="M18.6 17 L28.4 11.6 V22.6 Z" fill="#fff" stroke="#050507" stroke-width="1.1" stroke-linejoin="bevel"/>
<rect x="14.8" y="16" width="3.8" height="2" fill="#050507"/>
<path d="M47 22.3 V32.3 L56.6 26.8 Z" fill="#fff" stroke="#050507" stroke-width="1.1" stroke-linejoin="bevel"/>
<rect x="58.4" y="25.6" width="2.4" height="2.4" fill="#050507"/>
</svg>
<svg style="position:absolute;left:2782px;top:574px;" width="26" height="18" viewBox="0 0 26 18"><path d="M1.2 9 Q13 -7 24.8 9 Q13 25 1.2 9 Z" stroke="#0a84ff" stroke-width="1.6" fill="none"/><circle cx="13" cy="9" r="4.3" stroke="#0a84ff" stroke-width="1.6" fill="none"/></svg>
<svg style="position:absolute;left:2437.8px;top:608px;" width="64" height="44" viewBox="0 0 64 44"><g fill="none" stroke="#050507" stroke-width="2.6">
<path d="M23.8 21 V32.5 H17.5 A10.65 10.65 0 0 1 17.5 11.2 H29.3 V23.6"/>
<path d="M34.4 10.2 V32.5 H47.5 M34.4 11.2 H42.5 A9 9 0 0 1 51.5 20.2 V21.8"/>
</g>
<path d="M18.6 17 L28.4 11.6 V22.6 Z" fill="#fff" stroke="#050507" stroke-width="1.1" stroke-linejoin="bevel"/>
<rect x="14.8" y="16" width="3.8" height="2" fill="#050507"/>
<path d="M47 22.3 V32.3 L56.6 26.8 Z" fill="#fff" stroke="#050507" stroke-width="1.1" stroke-linejoin="bevel"/>
<rect x="58.4" y="25.6" width="2.4" height="2.4" fill="#050507"/>
</svg>
<svg style="position:absolute;left:2448px;top:670px;" width="26" height="18" viewBox="0 0 26 18"><path d="M1.2 9 Q13 -7 24.8 9 Q13 25 1.2 9 Z" stroke="#0a84ff" stroke-width="1.6" fill="none"/><circle cx="13" cy="9" r="4.3" stroke="#0a84ff" stroke-width="1.6" fill="none"/></svg>
<svg style="position:absolute;left:2557.8px;top:704px;" width="64" height="44" viewBox="0 0 64 44"><g fill="none" stroke="#050507" stroke-width="2.6">
<path d="M23.8 21 V32.5 H17.5 A10.65 10.65 0 0 1 17.5 11.2 H29.3 V23.6"/>
<path d="M34.4 10.2 V32.5 H47.5 M34.4 11.2 H42.5 A9 9 0 0 1 51.5 20.2 V21.8"/>
</g>
<path d="M18.6 17 L28.4 11.6 V22.6 Z" fill="#fff" stroke="#050507" stroke-width="1.1" stroke-linejoin="bevel"/>
<rect x="14.8" y="16" width="3.8" height="2" fill="#050507"/>
<path d="M47 22.3 V32.3 L56.6 26.8 Z" fill="#fff" stroke="#050507" stroke-width="1.1" stroke-linejoin="bevel"/>
<rect x="58.4" y="25.6" width="2.4" height="2.4" fill="#050507"/>
</svg>
<svg style="position:absolute;left:2255.5px;top:956px;" width="24" height="24" viewBox="0 0 24 24"><circle cx="12" cy="12" r="10.3" stroke="#8e8e93" stroke-width="1.6" fill="none"/><g transform="translate(0.5,0.8)"><path d="M10.8 9.6 L16.6 14.8" stroke="#8e8e93" stroke-width="2.6" stroke-linecap="round"/><circle cx="9" cy="8.2" r="3.5" fill="#8e8e93"/><path d="M9.3 8 L11.6 4.6" stroke="#2b303f" stroke-width="2.3" stroke-linecap="round"/></g></svg>
<svg style="position:absolute;left:2288.8px;top:956px;" width="24" height="24" viewBox="0 0 24 24"><circle cx="12" cy="12" r="10" stroke="#0a84ff" stroke-width="1.8" fill="none"/><circle cx="12" cy="12" r="5.3" fill="#0a84ff"/></svg>
<svg style="position:absolute;left:2548px;top:2120px;" width="34" height="20" viewBox="0 0 34 20"><g fill="#ff453a"><rect x="2.8" y="2.2" width="3.2" height="3.6"/><rect x="2.8" y="8.2" width="3.2" height="3.6"/><rect x="2.8" y="14.3" width="3.2" height="3.6"/><rect x="8.9" y="2.2" width="21.1" height="3.6"/><rect x="8.9" y="8.2" width="21.1" height="3.6"/><rect x="8.9" y="14.3" width="21.1" height="3.6"/></g></svg>
<div style="position:absolute;left:2529px;top:759px;width:336px;height:505px;border-radius:13px;background:#000;opacity:.55;box-shadow:0 6px 18px rgba(0,0,0,.9)"></div>
<div style="position:absolute;left:2530px;top:760px;width:334px;height:503px;box-sizing:border-box;border-radius:12px;background:#252b37;border:1.5px solid #54575e"></div>
<div style="position:absolute;left:2540px;top:858px;width:314px;height:44px;background:#1a64c6;border-radius:9px"></div>
<div style="position:absolute;left:2557.27px;top:779.29px;font-family:'Liberation Sans', sans-serif;font-size:26px;line-height:26px;color:#dedede;font-weight:normal;white-space:pre;-webkit-text-stroke:0.35px currentColor;transform:scale(1.0130,1.0);transform-origin:0 22.01px;">Rename Node...</div>
<div style="position:absolute;left:2557.22px;top:823.29px;font-family:'Liberation Sans', sans-serif;font-size:26px;line-height:26px;color:#dedede;font-weight:normal;white-space:pre;-webkit-text-stroke:0.35px currentColor;transform:scale(1.0407,1.0);transform-origin:0 22.01px;">Export Node...</div>
<div style="position:absolute;left:2559.30px;top:867.29px;font-family:'Liberation Sans', sans-serif;font-size:26px;line-height:26px;color:#ffffff;font-weight:normal;white-space:pre;-webkit-text-stroke:0.35px currentColor;transform:scale(1.0222,1.0);transform-origin:0 22.01px;">Add Node...</div>
<div style="position:absolute;left:2558.30px;top:934.29px;font-family:'Liberation Sans', sans-serif;font-size:26px;line-height:26px;color:#dedede;font-weight:normal;white-space:pre;-webkit-text-stroke:0.35px currentColor;transform:scale(1.0050,1.0);transform-origin:0 22.01px;">Cut</div>
<div style="position:absolute;left:2558.29px;top:977.29px;font-family:'Liberation Sans', sans-serif;font-size:26px;line-height:26px;color:#dedede;font-weight:normal;white-space:pre;-webkit-text-stroke:0.35px currentColor;transform:scale(1.0083,1.0);transform-origin:0 22.01px;">Copy</div>
<div style="position:absolute;left:2557.28px;top:1021.79px;font-family:'Liberation Sans', sans-serif;font-size:26px;line-height:26px;color:#dedede;font-weight:normal;white-space:pre;-webkit-text-stroke:0.35px currentColor;transform:scale(1.0078,1.0);transform-origin:0 22.01px;">Paste</div>
<div style="position:absolute;left:2557.22px;top:1065.29px;font-family:'Liberation Sans', sans-serif;font-size:26px;line-height:26px;color:#dedede;font-weight:normal;white-space:pre;-webkit-text-stroke:0.35px currentColor;transform:scale(1.0397,1.0);transform-origin:0 22.01px;">Delete</div>
<div style="position:absolute;left:2557.23px;top:1109.29px;font-family:'Liberation Sans', sans-serif;font-size:26px;line-height:26px;color:#6b6f78;font-weight:normal;white-space:pre;-webkit-text-stroke:0.35px currentColor;transform:scale(1.0359,1.0);transform-origin:0 22.01px;">Unlink Clone</div>
<div style="position:absolute;left:2559.30px;top:1174.29px;font-family:'Liberation Sans', sans-serif;font-size:26px;line-height:26px;color:#dedede;font-weight:normal;white-space:pre;-webkit-text-stroke:0.35px currentColor;transform:scale(1.0206,1.0);transform-origin:0 22.01px;">Add Parent Group</div>
<div style="position:absolute;left:2557.29px;top:1219.29px;font-family:'Liberation Sans', sans-serif;font-size:26px;line-height:26px;color:#dedede;font-weight:normal;white-space:pre;-webkit-text-stroke:0.35px currentColor;transform:scale(1.0056,1.0);transform-origin:0 22.01px;">Remove Parent</div>
<div style="position:absolute;left:2558px;top:912px;width:278px;height:2px;background:#474c56;"></div>
<div style="position:absolute;left:2558px;top:1154px;width:278px;height:2px;background:#474c56;"></div>
<svg style="position:absolute;left:2816px;top:1178px;" width="20" height="24" viewBox="0 0 20 24"><path d="M6 3 L14 11.5 L6 20" stroke="#dedede" stroke-width="2.6" fill="none"/></svg>
<div style="position:absolute;left:4px;top:1px;width:3101px;height:2156px;box-sizing:border-box;border:1.2px solid #6a6a6a;border-top-color:#7c7c7c;border-left:2px solid #474747;border-radius:17px 17px 17px 17px;pointer-events:none"></div>
</div></div>
</body></html>
